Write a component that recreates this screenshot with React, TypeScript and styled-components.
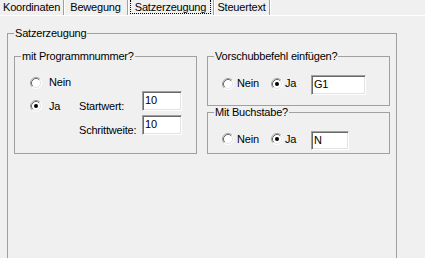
import React from "react";
import styled, { createGlobalStyle } from "styled-components";

const Global = createGlobalStyle`
  html, body { margin: 0; padding: 0; background: #f0f0f0; overflow: hidden; }
  body {
    font-family: "Liberation Sans", Arial, sans-serif;
    font-size: 11px;
    letter-spacing: -0.2px;
    color: #000;
  }
`;

const Window = styled.div`
  width: 425px;
  height: 258px;
  background: #f0f0f0;
  overflow: hidden;
`;

const TabBar = styled.div`
  display: flex;
  height: 15px;
`;

const Tab = styled.div<{ $w: number }>`
  width: ${(p) => p.$w}px;
  height: 15px;
  box-sizing: border-box;
  display: flex;
  padding: 0 2px;
  border-right: 1px solid #a0a0a0;
  box-shadow: 1px 0 0 #fff;
  white-space: nowrap;
`;

const TabLabel = styled.span<{ $focus?: boolean }>`
  flex: 1;
  height: 14px;
  box-sizing: border-box;
  text-align: center;
  line-height: 13px;
  padding-top: 1px;
  border: 1px dotted ${(p) => (p.$focus ? "#000" : "transparent")};
  border-top: none;
`;

const Page = styled.div`
  border-top: 1px solid #fff;
  padding: 11px 0 0 7px;
`;

const Group = styled.fieldset<{ $h?: number; $pt: number }>`
  margin: 0;
  padding: ${(p) => p.$pt}px 6px 0 6px;
  border: 1px solid #a0a0a0;
  min-width: 0;
  box-sizing: border-box;
  ${(p) => (p.$h ? `height: ${p.$h}px;` : "")}
`;

const OuterGroup = styled(Group)`
  width: 390px;
  height: 260px;
`;

const Legend = styled.legend`
  padding: 0 1px;
  line-height: 13px;
`;

const Columns = styled.div`
  display: grid;
  grid-template-columns: 183px 183px;
  column-gap: 10px;
`;

const RightColumn = styled.div`
  display: flex;
  flex-direction: column;
`;

const Option = styled.label<{ $gap: number; $w?: number }>`
  display: inline-flex;
  align-items: center;
  gap: ${(p) => p.$gap}px;
  line-height: 13px;
  flex: none;
  ${(p) => (p.$w ? `width: ${p.$w}px;` : "")}
  svg { flex: none; }
`;

const ProgramBody = styled.div`
  margin-left: 9px;
  display: flex;
  flex-direction: column;
`;

const FirstLine = styled.div`
  height: 15px;
  margin-bottom: 1px;
  display: flex;
  align-items: center;
`;

const NumberGrid = styled.div`
  display: grid;
  grid-template-columns: 49px 63px 40px;
  grid-template-rows: 20px 20px;
  row-gap: 4px;
`;

const Cell = styled.div`
  padding-top: 8.5px;
  line-height: 13px;
  white-space: nowrap;
  display: flex;
  align-items: flex-start;
`;

const InlineRow = styled.div`
  margin-left: 8px;
  display: flex;
  align-items: center;
  & > ${Option} {
    margin-bottom: 3px;
  }
`;

const TextBox = styled.input<{ $w: number; $h: number }>`
  width: ${(p) => p.$w}px;
  height: ${(p) => p.$h}px;
  box-sizing: border-box;
  margin: 0;
  border: 1px solid;
  border-color: #a0a0a0 #fff #fff #a0a0a0;
  box-shadow: inset 1px 1px 0 #696969, inset -1px -1px 0 #e3e3e3;
  padding: 0 2px 2px 2px;
  font-family: inherit;
  font-size: 11px;
  letter-spacing: inherit;
  color: #000;
  background: #fff;
  outline: none;
`;

const Radio = ({ checked }: { checked?: boolean }) => (
  <svg width="12" height="12" viewBox="0 0 12 12">
    <circle cx="6" cy="6" r="5" fill="#fff" />
    <path d="M2.11 9.89A5.5 5.5 0 0 1 9.89 2.11" stroke="#a0a0a0" fill="none" />
    <path d="M9.89 2.11A5.5 5.5 0 0 1 2.11 9.89" stroke="#ffffff" fill="none" />
    <path d="M2.82 9.18A4.5 4.5 0 0 1 9.18 2.82" stroke="#696969" fill="none" />
    <path d="M9.18 2.82A4.5 4.5 0 0 1 2.82 9.18" stroke="#e3e3e3" fill="none" />
    {checked && <circle cx="6" cy="6" r="2" fill="#000" />}
  </svg>
);

const tabs = [
  { label: "Koordinaten", w: 64 },
  { label: "Bewegung", w: 64 },
  { label: "Satzerzeugung", w: 86, focus: true },
  { label: "Steuertext", w: 56 },
];

export default function App() {
  return (
    <Window>
      <Global />
      <TabBar>
        {tabs.map((t) => (
          <Tab key={t.label} $w={t.w}>
            <TabLabel $focus={t.focus}>{t.label}</TabLabel>
          </Tab>
        ))}
      </TabBar>
      <Page>
        <OuterGroup $pt={10}>
          <Legend>Satzerzeugung</Legend>
          <Columns>
            <Group $pt={12}>
              <Legend>mit Programmnummer?</Legend>
              <ProgramBody>
                <FirstLine>
                  <Option $gap={7}>
                    <Radio />
                    Nein
                  </Option>
                </FirstLine>
                <NumberGrid>
                  <Cell>
                    <Option $gap={7}>
                      <Radio checked />
                      Ja
                    </Option>
                  </Cell>
                  <Cell>Startwert:</Cell>
                  <TextBox $w={40} $h={20} defaultValue="10" />
                  <Cell />
                  <Cell>Schrittweite:</Cell>
                  <TextBox $w={40} $h={20} defaultValue="10" />
                </NumberGrid>
              </ProgramBody>
            </Group>
            <RightColumn>
              <Group $pt={12} $h={56}>
                <Legend>Vorschubbefehl einfügen?</Legend>
                <InlineRow>
                  <Option $gap={3} $w={49}>
                    <Radio />
                    Nein
                  </Option>
                  <Option $gap={2} $w={40}>
                    <Radio checked />
                    Ja
                  </Option>
                  <TextBox $w={55} $h={20} defaultValue="G1" />
                </InlineRow>
              </Group>
              <Group $pt={12} $h={48}>
                <Legend>Mit Buchstabe?</Legend>
                <InlineRow>
                  <Option $gap={3} $w={49}>
                    <Radio />
                    Nein
                  </Option>
                  <Option $gap={2} $w={40}>
                    <Radio checked />
                    Ja
                  </Option>
                  <TextBox $w={38} $h={19} defaultValue="N" />
                </InlineRow>
              </Group>
            </RightColumn>
          </Columns>
        </OuterGroup>
      </Page>
    </Window>
  );
}
